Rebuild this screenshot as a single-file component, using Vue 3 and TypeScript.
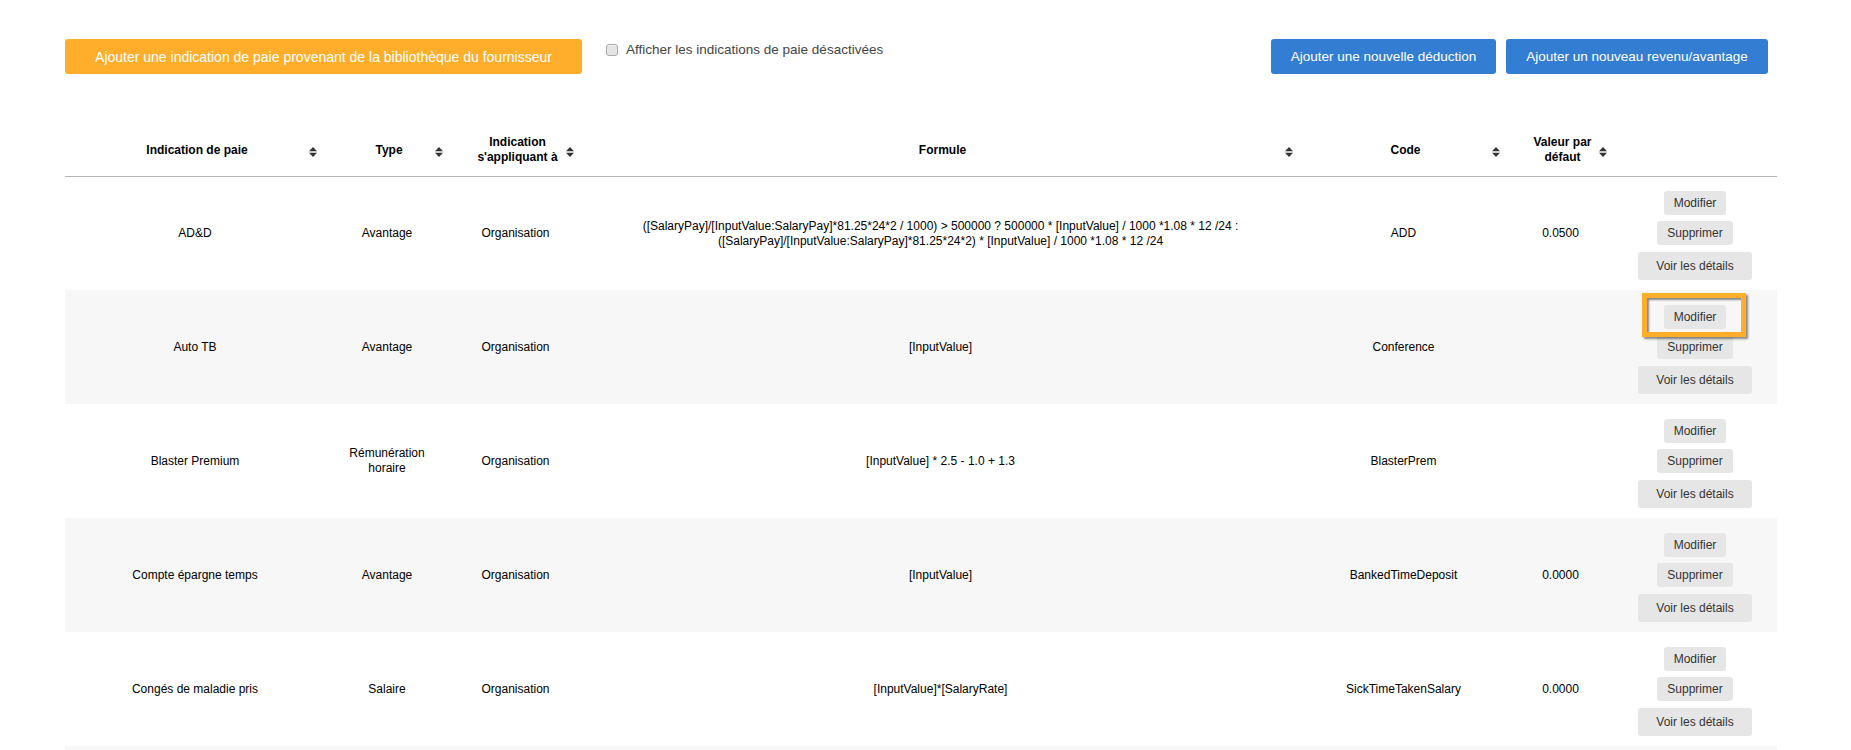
<script setup lang="ts">
interface Row {
  name: string
  type: string
  formula: string
  code: string
  value: string
  highlight?: boolean
}

const headers = [
  'Indication de paie',
  'Type',
  "Indication s'appliquant à",
  'Formule',
  'Code',
  'Valeur par défaut',
]

const rows: Row[] = [
  {
    name: 'AD&D',
    type: 'Avantage',
    formula:
      '([SalaryPay]/[InputValue:SalaryPay]*81.25*24*2 / 1000) > 500000 ? 500000 * [InputValue] / 1000 *1.08 * 12 /24 : ([SalaryPay]/[InputValue:SalaryPay]*81.25*24*2) * [InputValue] / 1000 *1.08 * 12 /24',
    code: 'ADD',
    value: '0.0500',
  },
  { name: 'Auto TB', type: 'Avantage', formula: '[InputValue]', code: 'Conference', value: '', highlight: true },
  { name: 'Blaster Premium', type: 'Rémunération horaire', formula: '[InputValue] * 2.5 - 1.0 + 1.3', code: 'BlasterPrem', value: '' },
  { name: 'Compte épargne temps', type: 'Avantage', formula: '[InputValue]', code: 'BankedTimeDeposit', value: '0.0000' },
  { name: 'Congés de maladie pris', type: 'Salaire', formula: '[InputValue]*[SalaryRate]', code: 'SickTimeTakenSalary', value: '0.0000' },
]
</script>

<template>
  <div class="page">
    <div class="toolbar">
      <button class="btn btn-orange" type="button">Ajouter une indication de paie provenant de la bibliothèque du fournisseur</button>
      <label class="check">
        <input type="checkbox" />
        <span>Afficher les indications de paie désactivées</span>
      </label>
      <div class="toolbar-right">
        <button class="btn btn-blue first" type="button">Ajouter une nouvelle déduction</button>
        <button class="btn btn-blue second" type="button">Ajouter un nouveau revenu/avantage</button>
      </div>
    </div>

    <table class="grid">
      <colgroup>
        <col class="c1" /><col class="c2" /><col class="c3" /><col class="c4" /><col class="c5" /><col class="c6" /><col class="c7" />
      </colgroup>
      <thead>
        <tr>
          <th v-for="h in headers" :key="h">
            {{ h }}
            <svg class="sort" width="8" height="10" viewBox="0 0 8 10" aria-hidden="true">
              <path d="M4 0 L8 4.2 H0 Z" />
              <path d="M0 5.8 H8 L4 10 Z" />
            </svg>
          </th>
          <th></th>
        </tr>
      </thead>
      <tbody>
        <tr v-for="r in rows" :key="r.name">
          <td>{{ r.name }}</td>
          <td>{{ r.type }}</td>
          <td>Organisation</td>
          <td class="formula">{{ r.formula }}</td>
          <td>{{ r.code }}</td>
          <td>{{ r.value }}</td>
          <td class="actions">
            <div class="stack">
              <span class="mod-wrap">
                <button class="act" type="button">Modifier</button>
                <span v-if="r.highlight" class="callout"></span>
              </span>
              <button class="act" type="button">Supprimer</button>
              <button class="act big" type="button">Voir les détails</button>
            </div>
          </td>
        </tr>
        <tr class="tail"><td colspan="7"></td></tr>
      </tbody>
    </table>
  </div>
</template>

<style>
html, body { margin: 0; background: #fff; overflow: hidden; }
</style>

<style scoped>
.page {
  width: 1851px;
  height: 750px;
  overflow: hidden;
  padding: 39px 0 0 65px;
  box-sizing: border-box;
  font-family: "Liberation Sans", Arial, sans-serif;
  font-size: 12px;
  color: #000;
}
.toolbar {
  display: flex;
  align-items: flex-start;
  width: 1703px;
  height: 35px;
}
.btn {
  height: 35px;
  border: 0;
  border-radius: 3px;
  color: #fff;
  font: 14px "Liberation Sans", Arial, sans-serif;
  padding: 0;
}
.btn-orange { width: 517px; background: #ffae2b; }
.btn-blue { background: #337ed3; font-size: 13.5px; }
.first { width: 225px; }
.second { width: 262px; margin-left: 10px; }
.check {
  display: flex;
  align-items: center;
  margin-left: 24px;
  margin-top: 3px;
  font-size: 13.5px;
  line-height: 16px;
  color: #444;
}
.check input {
  appearance: none;
  width: 12px;
  height: 12px;
  margin: -1px 8px 0 0;
  box-sizing: border-box;
  background: #e4e4e4;
  border: 1px solid #a9a9a9;
  border-radius: 3px;
  box-shadow: inset 0 1px 1px rgba(255, 255, 255, 0.6);
}
.toolbar-right { margin-left: auto; display: flex; }

.grid {
  margin-top: 46px;
  width: 1712px;
  table-layout: fixed;
  border-collapse: separate;
  border-spacing: 0;
}
.c1 { width: 258px; }
.c2 { width: 126px; }
.c3 { width: 131px; }
.c4 { width: 719px; }
.c5 { width: 207px; }
.c6 { width: 107px; }
.c7 { width: 164px; }
th {
  position: relative;
  height: 57px;
  box-sizing: border-box;
  padding: 4px 10px 0 16px;
  font-size: 12px;
  line-height: 15px;
  font-weight: 700;
  text-align: center;
  border-bottom: 1px solid #b4b4b4;
}
.sort {
  position: absolute;
  right: 6px;
  top: 27px;
  fill: #333;
}
td {
  height: 114px;
  padding: 0 17px 0 19px;
  box-sizing: border-box;
  text-align: center;
  vertical-align: middle;
  line-height: 15px;
}
tbody tr:first-child td { height: 113px; }
.formula { padding: 0 39px 0 41px; }
tbody tr:nth-child(even) { background: #f7f7f7; }
.tail td { height: 10px; }
.actions { padding: 5px 0 0 0; }
tbody tr:first-child .actions { padding-top: 4px; }
.stack {
  display: flex;
  flex-direction: column;
  align-items: center;
  gap: 6px;
}
.mod-wrap { position: relative; display: block; }
.act {
  display: block;
  height: 24px;
  padding: 0 10px;
  border: 0;
  border-radius: 3px;
  background: #e6e6e6;
  color: #333;
  font: 12px "Liberation Sans", Arial, sans-serif;
}
.big {
  height: 28px;
  padding: 0 18px;
  margin-top: 1px;
}
.callout {
  position: absolute;
  left: -22px;
  top: -12px;
  width: 94px;
  height: 34px;
  border: 5px solid #ffae2b;
  box-shadow: 2px 2px 2px rgba(0, 0, 0, 0.45), inset 2px 2px 2px rgba(0, 0, 0, 0.45);
}
</style>
